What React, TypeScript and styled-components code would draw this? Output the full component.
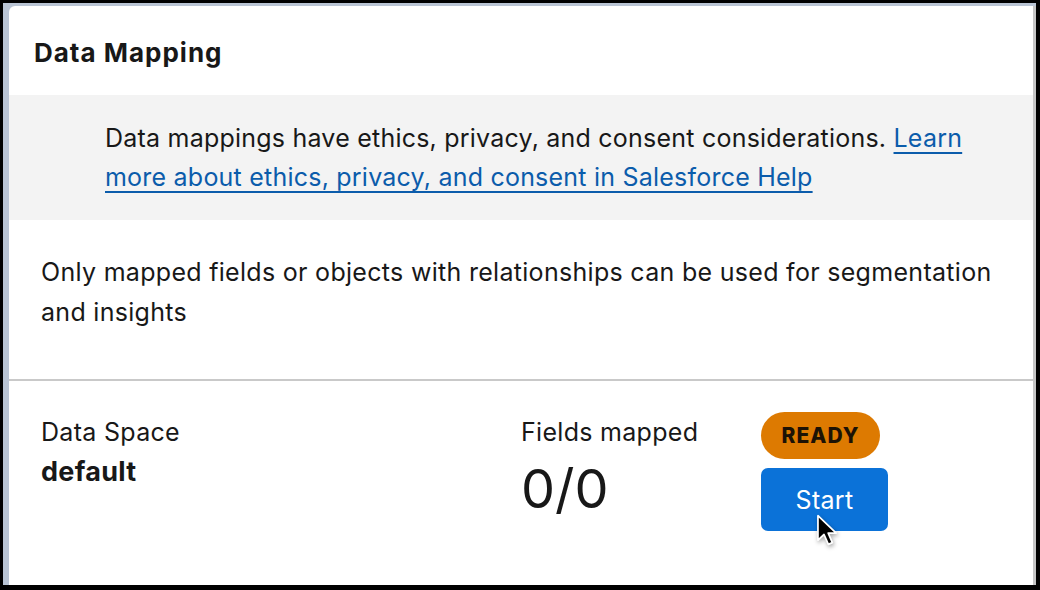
import React from "react";
import styled, { createGlobalStyle } from "styled-components";

const GlobalStyle = createGlobalStyle`
  html, body {
    margin: 0;
    padding: 0;
    background: #000;
    width: 1040px;
    height: 590px;
    overflow: hidden;
  }
  * { box-sizing: border-box; }
`;

const Frame = styled.div`
  width: 1040px;
  height: 590px;
  padding: 3px 4px 5px 3px;
  background: #000;
`;

const Window = styled.div`
  height: 100%;
  background: #b9c4d4;
  padding: 3px 0 0 6px;
`;

const Card = styled.div`
  height: 100%;
  background: #fff;
  border-right: 3px solid #c4c4c4;
  border-top-left-radius: 6px;
  font-family: Inter, "Liberation Sans", sans-serif;
  color: #181818;
  display: flex;
  flex-direction: column;
`;

const Header = styled.h1`
  margin: 0;
  padding: 31px 25px 0;
  height: 89px;
  font-size: 26px;
  line-height: 32px;
  font-weight: 700;
  letter-spacing: 1px;
`;

const Notice = styled.div`
  background: #f3f3f3;
  padding: 24px 60px 24px 96px;
  font-size: 25px;
  letter-spacing: 0.22px;
  line-height: 39px;
  height: 125px;
`;

const HelpLink = styled.a`
  color: #0b5cab;
  text-decoration: underline;
  text-decoration-thickness: 2px;
  text-underline-offset: 5px;
`;

const Intro = styled.p`
  margin: 0;
  padding: 32px 36px 0 32px;
  height: 161px;
  font-size: 25px;
  letter-spacing: 0.3px;
  line-height: 40px;
  border-bottom: 2px solid #c9c9c9;
`;

const Summary = styled.div`
  display: flex;
  padding: 31px 0 0 32px;
`;

const Field = styled.div<{ $width: number }>`
  width: ${({ $width }) => $width}px;
  display: flex;
  flex-direction: column;
`;

const Label = styled.span`
  font-size: 25px;
  letter-spacing: 0.3px;
  line-height: 40px;
`;

const Value = styled.span`
  font-size: 27px;
  letter-spacing: 0.3px;
  line-height: 40px;
  font-weight: 700;
`;

const BigNumber = styled.span`
  font-size: 54px;
  line-height: 74px;
  font-weight: 400;
`;

const Actions = styled.div`
  display: flex;
  flex-direction: column;
  align-items: flex-start;
  gap: 9px;
  position: relative;
`;

const Badge = styled.span`
  background: #dd7a01;
  color: #1c1205;
  font-size: 21px;
  font-weight: 800;
  letter-spacing: 1px;
  height: 47px;
  width: 119px;
  border-radius: 24px;
  display: flex;
  align-items: center;
  justify-content: center;
`;

const StartButton = styled.button`
  background: #0b72d8;
  color: #fff;
  border: none;
  border-radius: 7px;
  width: 127px;
  height: 63px;
  font-family: inherit;
  font-size: 25px;
  letter-spacing: 0.3px;
  padding: 0;
`;

const Cursor = styled.svg`
  position: absolute;
  left: 55px;
  top: 102px;
  filter: drop-shadow(1px 2px 2px rgba(0, 0, 0, 0.35));
`;

export default function App() {
  return (
    <>
      <GlobalStyle />
      <Frame>
        <Window>
          <Card>
            <Header>Data Mapping</Header>
            <Notice>
              Data mappings have ethics, privacy, and consent considerations.{" "}
              <HelpLink href="#">
                Learn more about ethics, privacy, and consent in Salesforce Help
              </HelpLink>
            </Notice>
            <Intro>
              Only mapped fields or objects with relationships can be used for
              segmentation and insights
            </Intro>
            <Summary>
              <Field $width={480}>
                <Label>Data Space</Label>
                <Value>default</Value>
              </Field>
              <Field $width={240}>
                <Label>Fields mapped</Label>
                <BigNumber>0/0</BigNumber>
              </Field>
              <Actions>
                <Badge>READY</Badge>
                <StartButton>Start</StartButton>
                <Cursor width="23" height="33" viewBox="0 0 13 19">
                  <path
                    d="M1 1 L1 15 L4.5 11.8 L7 17.5 L9.3 16.5 L6.9 11 L11.5 11 Z"
                    fill="#000"
                    stroke="#fff"
                    strokeWidth="1"
                    strokeLinejoin="round"
                  />
                </Cursor>
              </Actions>
            </Summary>
          </Card>
        </Window>
      </Frame>
    </>
  );
}
